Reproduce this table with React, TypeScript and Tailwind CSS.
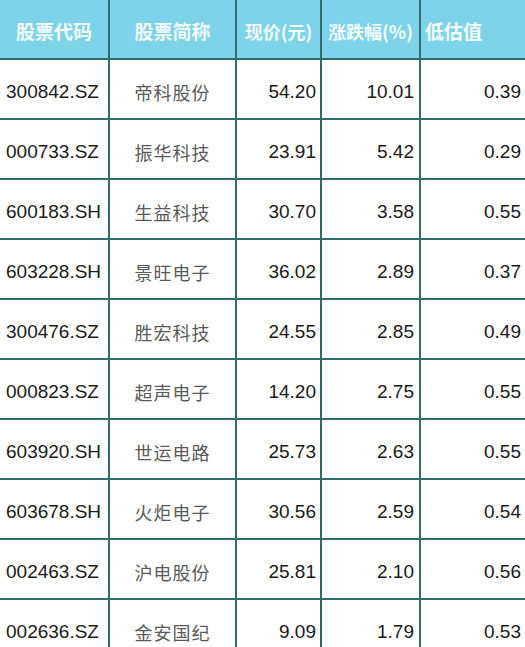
import React from 'react';

const rows = [
  ['300842.SZ', '帝科股份', '54.20', '10.01', '0.39'],
  ['000733.SZ', '振华科技', '23.91', '5.42', '0.29'],
  ['600183.SH', '生益科技', '30.70', '3.58', '0.55'],
  ['603228.SH', '景旺电子', '36.02', '2.89', '0.37'],
  ['300476.SZ', '胜宏科技', '24.55', '2.85', '0.49'],
  ['000823.SZ', '超声电子', '14.20', '2.75', '0.55'],
  ['603920.SH', '世运电路', '25.73', '2.63', '0.55'],
  ['603678.SH', '火炬电子', '30.56', '2.59', '0.54'],
  ['002463.SZ', '沪电股份', '25.81', '2.10', '0.56'],
  ['002636.SZ', '金安国纪', '9.09', '1.79', '0.53'],
];

const cjk = "font-['Noto_Sans_CJK_SC',sans-serif]";
const num = "font-['Liberation_Sans',Arial,sans-serif] text-[19px] text-[#1a1a1a]";
const head = `bg-[#7dd3ea] flex items-center pt-[4px] font-bold text-[#f3fcff] ${cjk}`;

const App: React.FC = () => {
  return (
    <div className="w-[525px] h-[647px] overflow-hidden bg-white">
      <div className="grid grid-cols-[108px_125px_83px_97px_1fr] auto-rows-[58px] gap-[2px] bg-[#2e6d6a]">
        <div className={`${head} justify-center text-[19px]`}>股票代码</div>
        <div className={`${head} justify-center text-[19px]`}>股票简称</div>
        <div className={`${head} justify-center text-[18px]`}>现价(元)</div>
        <div className={`${head} justify-center text-[18px]`}>涨跌幅(%)</div>
        <div className={`${head} pl-[4px] text-[19px]`}>低估值</div>
        {rows.map((r) => (
          <React.Fragment key={r[0]}>
            <div className={`bg-white flex items-center pl-[6px] pt-[6px] ${num}`}>{r[0]}</div>
            <div className={`bg-white flex items-center justify-center pt-[6px] text-[18px] tracking-[1px] text-[#5a5a5a] ${cjk}`}>{r[1]}</div>
            <div className={`bg-white flex items-center justify-end pr-[4px] pt-[6px] ${num}`}>{r[2]}</div>
            <div className={`bg-white flex items-center justify-end pr-[5px] pt-[6px] ${num}`}>{r[3]}</div>
            <div className={`bg-white flex items-center justify-end pr-[4px] pt-[6px] ${num}`}>{r[4]}</div>
          </React.Fragment>
        ))}
      </div>
    </div>
  );
};

export default App;
